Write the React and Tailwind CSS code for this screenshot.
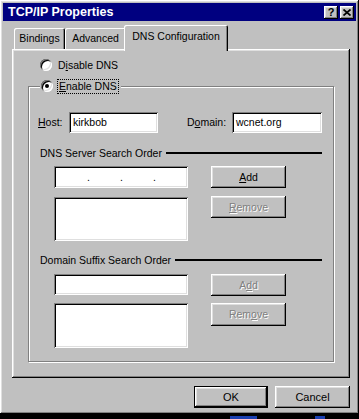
import React from 'react';

const raised = 'shadow-[inset_-1px_-1px_#000,inset_1px_1px_#fff,inset_-2px_-2px_#808080,inset_2px_2px_#dfdfdf]';
const sunken = 'shadow-[inset_1px_1px_#808080,inset_-1px_-1px_#fff,inset_2px_2px_#000,inset_-2px_-2px_#dfdfdf]';
const tabEdge = 'shadow-[inset_1px_1px_#fff,inset_-1px_0_#000,inset_-2px_0_#808080]';

function Key({ children }) {
  return <span className="underline underline-offset-[1px]">{children}</span>;
}

function Button({ children, disabled, isDefault, className = '' }) {
  return (
    <div
      className={`flex items-center justify-center bg-[#c0c0c0] ${raised} ${
        isDefault ? 'border border-black' : ''
      } ${disabled ? 'text-[#808080] [text-shadow:1px_1px_0_#fff]' : 'text-black'} ${className}`}
    >
      {children}
    </div>
  );
}

function Radio({ checked }) {
  return (
    <div className={`w-[12px] h-[12px] rounded-full bg-white flex items-center justify-center ${sunken}`}>
      {checked && <div className="w-[4px] h-[4px] rounded-full bg-black" />}
    </div>
  );
}

function Field({ children, className = '' }) {
  return <div className={`bg-white flex items-center pl-[4px] ${sunken} ${className}`}>{children}</div>;
}

export default function App() {
  return (
    <div
      className="w-[359px] h-[419px] bg-black flex flex-col text-[10.5px] text-black leading-none"
      style={{ fontFamily: '"Liberation Sans", Arial, sans-serif' }}
    >
      {/* Window */}
      <div className={`h-[414px] bg-[#c0c0c0] p-[3px] flex flex-col ${raised}`}>
        {/* Title bar */}
        <div className="h-[18px] bg-[#000080] flex items-center justify-between pl-[5px] pr-[2px]">
          <span className="text-white font-bold text-[12.5px]">TCP/IP Properties</span>
          <div className="flex gap-[2px]">
            <div className={`w-[14px] h-[13px] bg-[#c0c0c0] flex items-center justify-center font-bold text-[11px] ${raised}`}>?</div>
            <div className={`w-[14px] h-[13px] bg-[#c0c0c0] flex items-center justify-center ${raised}`}>
              <svg width="8" height="7" viewBox="0 0 8 7">
                <path d="M0.5 0.5 L7.5 6.5 M7.5 0.5 L0.5 6.5" stroke="#000" strokeWidth="1.7" />
              </svg>
            </div>
          </div>
        </div>

        <div className="flex flex-col pl-[9px] pr-[6px]">
          {/* Tabs */}
          <div className="mt-[4px] h-[24px] flex items-end pl-[2px]">
            <div className={`w-[51px] h-[21px] rounded-t-[2px] flex items-center justify-center ${tabEdge}`}>Bindings</div>
            <div className={`w-[61px] h-[21px] rounded-t-[2px] flex items-center justify-center ${tabEdge}`}>Advanced</div>
            <div className={`relative z-10 -ml-[2px] -mb-[2px] w-[104px] h-[26px] pb-[3px] rounded-t-[2px] bg-[#c0c0c0] flex items-center justify-center ${tabEdge}`}>
              DNS Configuration
            </div>
          </div>

          {/* Panel */}
          <div className={`h-[329px] flex flex-col ${raised}`}>
            <div className="mt-[9px] h-[14px] flex items-center pl-[28px] gap-[6px]">
              <Radio />
              <span>
                D<Key>i</Key>sable DNS
              </span>
            </div>

            {/* Group box */}
            <div className="relative mt-[14px] ml-[16px] w-[306px] h-[276px] border border-[#808080] shadow-[1px_1px_0_#fff,inset_1px_1px_0_#fff] flex flex-col">
              <div className="absolute left-[11px] -top-[9px] h-[16px] pl-[1px] pr-[2px] bg-[#c0c0c0] flex items-center gap-[4px]">
                <Radio checked />
                <span className="border border-dotted border-black px-[1px] h-[15px] flex items-center">
                  <Key>E</Key>nable DNS
                </span>
              </div>

              <div className="mt-[25px] h-[21px] flex items-center">
                <span className="ml-[9px] w-[31px]">
                  <Key>H</Key>ost:
                </span>
                <Field className="w-[89px] h-[21px]">kirkbob</Field>
                <span className="ml-[29px] w-[45px]">
                  D<Key>o</Key>main:
                </span>
                <Field className="w-[90px] h-[21px]">wcnet.org</Field>
              </div>

              <div className="mt-[13px] h-[14px] flex items-center pl-[11px] pr-[11px]">
                <span>DNS Server Search Order</span>
                <div className="flex-1 h-[2px] bg-black ml-[4px]" />
              </div>

              <div className="mt-[6px] flex pl-[25px]">
                <div className="flex flex-col gap-[9px]">
                  <Field className="w-[134px] h-[22px] pl-[2px]">
                    <span className="w-[29px]" />
                    <span className="w-[33px]">.</span>
                    <span className="w-[33px]">.</span>
                    <span>.</span>
                  </Field>
                  <Field className="w-[134px] h-[44px]" />
                </div>
                <div className="ml-[23px] flex flex-col gap-[8px]">
                  <Button className="w-[75px] h-[22px]">
                    <Key>A</Key>dd
                  </Button>
                  <Button disabled className="w-[75px] h-[22px]">
                    <Key>R</Key>emove
                  </Button>
                </div>
              </div>

              <div className="mt-[12px] h-[14px] flex items-center pl-[11px] pr-[11px]">
                <span>Domain Suffix Search Order</span>
                <div className="flex-1 h-[2px] bg-black ml-[4px]" />
              </div>

              <div className="mt-[7px] flex pl-[25px]">
                <div className="flex flex-col gap-[8px]">
                  <Field className="w-[134px] h-[21px]" />
                  <Field className="w-[134px] h-[45px]" />
                </div>
                <div className="ml-[23px] flex flex-col gap-[7px]">
                  <Button disabled className="w-[75px] h-[22px]">
                    A<Key>d</Key>d
                  </Button>
                  <Button disabled className="w-[75px] h-[23px]">
                    Rem<Key>o</Key>ve
                  </Button>
                </div>
              </div>
            </div>
          </div>

          {/* Dialog buttons */}
          <div className="mt-[8px] flex justify-end gap-[7px]">
            <Button isDefault className="w-[74px] h-[22px] text-[11px]">OK</Button>
            <Button className="w-[75px] h-[22px] text-[11px]">Cancel</Button>
          </div>
        </div>
      </div>

      {/* Taskbar strip */}
      <div className="h-[5px] flex items-end">
        <div className="ml-[230px] w-[27px] h-[3px] bg-[#1a3fb0]" />
        <div className="ml-[58px] w-[10px] h-[3px] bg-[#1a3fb0]" />
      </div>
    </div>
  );
}
